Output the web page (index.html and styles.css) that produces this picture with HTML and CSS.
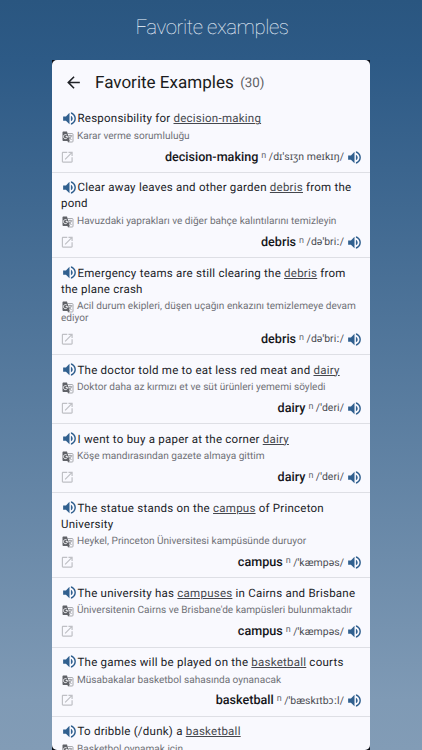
FILE: index.html
```
<!DOCTYPE html>
<html lang="en">
<head>
<meta charset="utf-8">
<title>Favorite examples</title>
<link rel="stylesheet" href="styles.css">
</head>
<body>
<svg class="defs" aria-hidden="true">
  <symbol id="vol" viewBox="0 0 24 24"><path d="M3 9v6h4l5 5V4L7 9H3zm13.5 3c0-1.77-1.02-3.29-2.5-4.03v8.05c1.48-.73 2.5-2.25 2.5-4.02zM14 3.23v2.06c2.89.86 5 3.54 5 6.71s-2.11 5.85-5 6.71v2.06c4.01-.91 7-4.49 7-8.77s-2.99-7.86-7-8.77z"/></symbol>
  <symbol id="tr" viewBox="0 0 24 24"><path d="M11 5h9.5c.8 0 1.5.7 1.5 1.500v14c0 .8-.7 1.500-1.500 1.500H12.500" fill="none" stroke="#96979c" stroke-width="1.600"/><path d="M12.500 9.500H20.500M16 7.500v2M18.700 9.800c-.6 2.800-2.400 5-4.700 7M14 11.500c1 2.500 3 4.500 5 6.500" fill="none" stroke="#85868b" stroke-width="1.600"/><path d="M3 1h7l5.500 19L12 23l-1-3H3c-1.100 0-2-.9-2-2V3c0-1.100.9-2 2-2z"/><path d="M9.800 8.300A4.100 4.100 0 1 0 11 11H7.300" fill="none" stroke="#f9f9fe" stroke-width="1.800"/></symbol>
  <symbol id="open" viewBox="0 0 24 24"><path d="M19 19H5V5h7V3H5c-1.11 0-2 .9-2 2v14c0 1.1.89 2 2 2h14c1.1 0 2-.9 2-2v-7h-2v7zM14 3v2h3.59l-9.83 9.83 1.41 1.41L19 6.41V10h2V3h-7z"/></symbol>
  <symbol id="back" viewBox="0 0 24 24"><path d="M20 11H7.83l5.59-5.59L12 4l-8 8 8 8 1.41-1.41L7.83 13H20v-2z"/></symbol>
</svg>
<h1 class="caption">Favorite examples</h1>
<div class="device">
<main class="screen">
  <header class="bar">
    <svg class="back"><use href="#back"/></svg>
    <h2 class="title">Favorite Examples</h2>
    <span class="count">(30)</span>
  </header>
  <article class="item">
    <p class="sentence"><svg class="vol"><use href="#vol"/></svg>Responsibility for <u>decision-making</u></p>
    <p class="translation"><svg class="tr"><use href="#tr"/></svg>Karar verme sorumluluğu</p>
    <div class="foot"><svg class="open"><use href="#open"/></svg><b>decision-making</b><span class="pos">n</span><span class="ipa">/dɪˈsɪʒn meɪkɪŋ/</span><svg class="vol"><use href="#vol"/></svg></div>
  </article>
  <article class="item">
    <p class="sentence"><svg class="vol"><use href="#vol"/></svg>Clear away leaves and other garden <u>debris</u> from the<br>pond</p>
    <p class="translation"><svg class="tr"><use href="#tr"/></svg>Havuzdaki yaprakları ve diğer bahçe kalıntılarını temizleyin</p>
    <div class="foot"><svg class="open"><use href="#open"/></svg><b>debris</b><span class="pos">n</span><span class="ipa">/dəˈbriː/</span><svg class="vol"><use href="#vol"/></svg></div>
  </article>
  <article class="item">
    <p class="sentence"><svg class="vol"><use href="#vol"/></svg>Emergency teams are still clearing the <u>debris</u> from<br>the plane crash</p>
    <p class="translation"><svg class="tr"><use href="#tr"/></svg>Acil durum ekipleri, düşen uçağın enkazını temizlemeye devam<br>ediyor</p>
    <div class="foot"><svg class="open"><use href="#open"/></svg><b>debris</b><span class="pos">n</span><span class="ipa">/dəˈbriː/</span><svg class="vol"><use href="#vol"/></svg></div>
  </article>
  <article class="item">
    <p class="sentence"><svg class="vol"><use href="#vol"/></svg>The doctor told me to eat less red meat and <u>dairy</u></p>
    <p class="translation"><svg class="tr"><use href="#tr"/></svg>Doktor daha az kırmızı et ve süt ürünleri yememi söyledi</p>
    <div class="foot"><svg class="open"><use href="#open"/></svg><b>dairy</b><span class="pos">n</span><span class="ipa">/ˈderi/</span><svg class="vol"><use href="#vol"/></svg></div>
  </article>
  <article class="item">
    <p class="sentence"><svg class="vol"><use href="#vol"/></svg>I went to buy a paper at the corner <u>dairy</u></p>
    <p class="translation"><svg class="tr"><use href="#tr"/></svg>Köşe mandırasından gazete almaya gittim</p>
    <div class="foot"><svg class="open"><use href="#open"/></svg><b>dairy</b><span class="pos">n</span><span class="ipa">/ˈderi/</span><svg class="vol"><use href="#vol"/></svg></div>
  </article>
  <article class="item">
    <p class="sentence"><svg class="vol"><use href="#vol"/></svg>The statue stands on the <u>campus</u> of Princeton<br>University</p>
    <p class="translation"><svg class="tr"><use href="#tr"/></svg>Heykel, Princeton Üniversitesi kampüsünde duruyor</p>
    <div class="foot"><svg class="open"><use href="#open"/></svg><b>campus</b><span class="pos">n</span><span class="ipa">/ˈkæmpəs/</span><svg class="vol"><use href="#vol"/></svg></div>
  </article>
  <article class="item">
    <p class="sentence"><svg class="vol"><use href="#vol"/></svg>The university has <u>campuses</u> in Cairns and Brisbane</p>
    <p class="translation"><svg class="tr"><use href="#tr"/></svg>Üniversitenin Cairns ve Brisbane'de kampüsleri bulunmaktadır</p>
    <div class="foot"><svg class="open"><use href="#open"/></svg><b>campus</b><span class="pos">n</span><span class="ipa">/ˈkæmpəs/</span><svg class="vol"><use href="#vol"/></svg></div>
  </article>
  <article class="item">
    <p class="sentence"><svg class="vol"><use href="#vol"/></svg>The games will be played on the <u>basketball</u> courts</p>
    <p class="translation"><svg class="tr"><use href="#tr"/></svg>Müsabakalar basketbol sahasında oynanacak</p>
    <div class="foot"><svg class="open"><use href="#open"/></svg><b>basketball</b><span class="pos">n</span><span class="ipa">/ˈbæskɪtbɔːl/</span><svg class="vol"><use href="#vol"/></svg></div>
  </article>
  <article class="item">
    <p class="sentence"><svg class="vol"><use href="#vol"/></svg>To dribble (/dunk) a <u>basketball</u></p>
    <p class="translation"><svg class="tr"><use href="#tr"/></svg>Basketbol oynamak için</p>
  </article>
</main>
</div>
</body>
</html>
```
FILE: styles.css
```
* { box-sizing: border-box; margin: 0; padding: 0; }
body {
  width: 422px;
  height: 750px;
  overflow: hidden;
  font-family: Roboto, "Noto Sans", sans-serif;
  text-rendering: geometricPrecision;
  background: linear-gradient(#2a5680 0, #2d5a86 60px, #7f9ab5 700px, #829cb6 750px);
  color: #202227;
}
.defs { position: absolute; width: 0; height: 0; }
svg { fill: currentColor; flex: none; }
.caption {
  height: 60px;
  padding-left: 2px;
  line-height: 55px;
  text-align: center;
  font-size: 20.4px;
  font-weight: 100;
  letter-spacing: -0.42px;
  color: #f0f7ff;
}
.device {
  width: 318px;
  height: 690px;
  margin-left: 52px;
  background: #080c14;
}
.screen {
  height: 690px;
  overflow: hidden;
  border-radius: 5px;
  background: #f9f9fe;
}
.bar {
  display: flex;
  align-items: center;
  height: 44px;
  padding-left: 12px;
}
.back { width: 19px; height: 19px; }
.title {
  margin: 1px 0 0 12px;
  font-size: 17.05px;
  font-weight: 400;
  color: #1b1c20;
}
.count {
  margin: 3px 0 0 6.5px;
  font-size: 13.3px;
  color: #5d5e63;
}
.item {
  padding: 6.4px 9px 0;
  border-bottom: 1px solid #dedfe5;
}
.sentence {
  line-height: 16px;
  font-size: 11.5px;
  letter-spacing: 0.24px;
  white-space: nowrap;
}
.vol {
  width: 17px;
  height: 17px;
  color: #31608f;
}
.sentence .vol { margin: -0.5px -0.5px -0.5px 0; vertical-align: top; }
.sentence u { color: #45474d; text-underline-offset: 1px; text-decoration-thickness: 1px; }
.translation {
  margin-top: 4.6px;
  line-height: 12px;
  font-size: 10.08px;
  color: #707177;
  white-space: nowrap;
}
.tr {
  width: 12px;
  height: 12px;
  margin: 0 3px 0 1px;
  vertical-align: top;
  color: #606268;
}
.foot {
  display: flex;
  align-items: center;
  height: 29.1px;
  padding-bottom: 0.8px;
  margin-right: -2px;
}
.open { width: 14.5px; height: 14.5px; margin: 0 auto 0 -1px; color: #bfc0c5; }
.foot b { font-size: 12.6px; font-weight: 500; color: #15161a; }
.pos { margin: -3px 2.5px 0 3px; font-size: 9px; color: #66686e; }
.ipa { font-size: 10.45px; color: #4b4d53; letter-spacing: 0.05px; }
.foot .vol { margin-left: 2px; }
```
